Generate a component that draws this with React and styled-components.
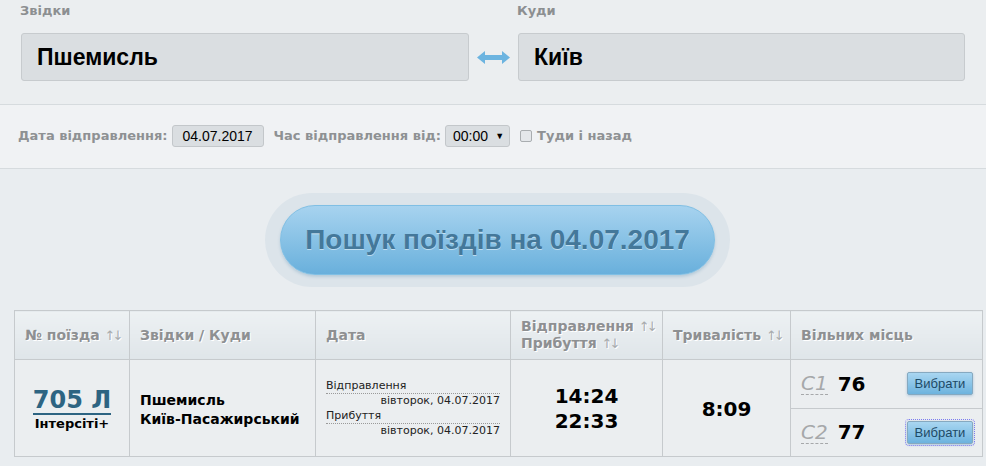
import styled, { createGlobalStyle } from 'styled-components';

const GlobalStyle = createGlobalStyle`
  html, body {
    margin: 0;
    padding: 0;
    background: #e9edf0;
  }
  * {
    box-sizing: border-box;
  }
`;

const Page = styled.div`
  width: 986px;
  height: 466px;
  overflow: hidden;
  background: #e9edf0;
  font-family: 'Liberation Sans', Arial, sans-serif;
`;

const StationsPanel = styled.div`
  display: flex;
  align-items: flex-end;
  height: 105px;
  padding: 0 21px 23px 21px;
  background: #ebeef0;
  border-bottom: 1px solid #d6dbde;
`;

const Field = styled.div`
  display: flex;
  flex-direction: column;
  width: ${({ $width }) => $width}px;
`;

const FieldLabel = styled.label`
  font-family: 'DejaVu Sans', Verdana, sans-serif;
  font-size: 13px;
  font-weight: 700;
  line-height: 16px;
  color: #8c8f91;
  margin: 0 0 14px -1px;
`;

const StationInput = styled.div`
  height: 48px;
  display: flex;
  align-items: center;
  padding: 0 15px;
  background: #dadee1;
  border: 1px solid #c7cbce;
  border-radius: 3px;
  font-size: 23px;
  font-weight: 700;
  color: #000;
`;

const Swap = styled.div`
  width: 49px;
  height: 48px;
  display: flex;
  align-items: center;
  justify-content: center;
`;

const FilterBar = styled.div`
  display: flex;
  align-items: center;
  height: 64px;
  padding: 0 18px 2px;
  background: #f0f2f4;
  border-bottom: 1px solid #d6dbde;
  font-family: 'DejaVu Sans', Verdana, sans-serif;
  font-size: 13px;
  font-weight: 700;
  color: #8e9193;
`;

const FilterLabel = styled.span`
  margin-right: 4px;
`;

const DateBox = styled.div`
  width: 92px;
  height: 22px;
  display: flex;
  align-items: center;
  justify-content: center;
  margin-right: 10px;
  background: #dadee1;
  border: 1px solid #c3c7ca;
  border-radius: 3px;
  font-family: 'Liberation Sans', Arial, sans-serif;
  font-size: 14px;
  font-weight: 400;
  color: #000;
`;

const TimeSelect = styled.div`
  width: 65px;
  height: 22px;
  display: flex;
  align-items: center;
  justify-content: space-between;
  padding: 0 5px 0 7px;
  margin-right: 10px;
  background: #dadee1;
  border: 1px solid #c3c7ca;
  border-radius: 3px;
  font-family: 'Liberation Sans', Arial, sans-serif;
  font-size: 14px;
  font-weight: 400;
  color: #000;

  span {
    font-size: 9px;
  }
`;

const Check = styled.span`
  width: 12px;
  height: 12px;
  margin-right: 5px;
  background: #e4e7ea;
  border: 1px solid #a9adb0;
  border-radius: 2px;
`;

const SearchArea = styled.div`
  display: flex;
  justify-content: center;
  padding: 24px 0 0 9px;
`;

const SearchRing = styled.div`
  width: 465px;
  height: 94px;
  padding: 12px 15px;
  background: #dce4ea;
  border-radius: 47px;
`;

const SearchButton = styled.button`
  width: 100%;
  height: 70px;
  display: flex;
  align-items: center;
  justify-content: center;
  padding: 0;
  background: linear-gradient(#a7d3ef, #69b0dc);
  border: 1px solid #80bfe4;
  border-radius: 35px;
  box-shadow: 0 2px 3px rgba(70, 130, 170, 0.25);
  font-family: 'Liberation Sans', Arial, sans-serif;
  font-size: 28px;
  font-weight: 700;
  color: #44789a;
  text-shadow: 0 1px 0 rgba(255, 255, 255, 0.5);
  cursor: pointer;
`;

const Table = styled.table`
  width: 968px;
  margin: 23px 0 0 14px;
  border-collapse: collapse;
  table-layout: fixed;
  font-family: 'DejaVu Sans', Verdana, sans-serif;
`;

const Th = styled.th`
  width: ${({ $width }) => $width}px;
  height: 49px;
  padding: 0 8px 0 10px;
  text-align: left;
  vertical-align: middle;
  white-space: nowrap;
  background: linear-gradient(#edf1f3, #dfe5e9);
  border: 1px solid #c6cacd;
  font-size: 14px;
  font-weight: 700;
  line-height: 17px;
  color: #8e9092;
  text-shadow: 1px 1px 0 #fff;
`;

const Sort = styled.span`
  font-size: 13px;
  font-weight: 400;
  letter-spacing: -3px;
  color: #a8abad;
`;

const Td = styled.td`
  height: 96px;
  padding: ${({ $flush }) => ($flush ? '0' : '0 10px')};
  text-align: ${({ $align }) => $align || 'left'};
  vertical-align: middle;
  background: #ebeef0;
  border: 1px solid #c6cacd;
  color: #000;
`;

const TrainNo = styled.a`
  display: inline-block;
  font-size: 24px;
  font-weight: 700;
  line-height: 26px;
  color: #2d6482;
  text-decoration: none;
  border-bottom: 2px solid #2d6482;
  padding-top: 3px;
`;

const TrainType = styled.div`
  font-size: 13px;
  font-weight: 700;
  line-height: 16px;
  margin-top: 1px;
`;

const Route = styled.div`
  font-size: 14px;
  font-weight: 700;
  line-height: 19px;
  padding-top: 4px;
`;

const DateCell = styled.div`
  font-size: 11px;
  line-height: 12px;
  color: #222;
  padding-top: 3px;
`;

const DateLabel = styled.div`
  border-bottom: 1px dotted #9a9a9a;
  padding-bottom: 1px;
`;

const DateValue = styled.div`
  text-align: right;
  font-size: 11px;
  line-height: 14px;
  margin-bottom: 2px;
`;

const BigTime = styled.div`
  font-size: 20px;
  font-weight: 700;
  line-height: 25px;
  padding-top: 2px;
`;

const Seats = styled.div`
  display: flex;
  flex-direction: column;
  height: 96px;
`;

const SeatRow = styled.div`
  flex: 1;
  display: flex;
  align-items: center;
  padding: 0 9px 0 10px;
  border-top: ${({ $first }) => ($first ? 'none' : '1px solid #c6cacd')};
`;

const Coach = styled.span`
  font-size: 20px;
  font-style: italic;
  color: #a6a8aa;
  border-bottom: 1px dashed #a6a8aa;
  line-height: 22px;
  margin-right: 10px;
`;

const Count = styled.span`
  flex: 1;
  font-size: 20px;
  font-weight: 700;
  line-height: 22px;
`;

const PickButton = styled.button`
  width: 66px;
  height: 23px;
  padding: 0;
  background: linear-gradient(#a9d6f1, #6db3de);
  border: 1px solid #86a9c0;
  border-radius: 2px;
  box-shadow: 0 1px 3px rgba(80, 140, 190, 0.4);
  font-family: 'Liberation Sans', Arial, sans-serif;
  font-size: 13px;
  color: #1d4a66;
  outline: ${({ $focused }) => ($focused ? '1px dotted #7c7cf0' : 'none')};
  outline-offset: 1px;
  cursor: pointer;
`;

const SwapIcon = () => (
  <svg width="33" height="13" viewBox="0 0 33 13">
    <polygon
      points="0,6.5 8,0 8,4 25,4 25,0 33,6.5 25,13 25,9 8,9 8,13"
      fill="#6cb4e0"
    />
  </svg>
);

const seats = [
  { coach: 'С1', count: 76 },
  { coach: 'С2', count: 77 }
];

const App = () => {
  return (
    <Page>
      <GlobalStyle />
      <StationsPanel>
        <Field $width={448}>
          <FieldLabel>Звідки</FieldLabel>
          <StationInput>Пшемисль</StationInput>
        </Field>
        <Swap>
          <SwapIcon />
        </Swap>
        <Field $width={447}>
          <FieldLabel>Куди</FieldLabel>
          <StationInput>Київ</StationInput>
        </Field>
      </StationsPanel>

      <FilterBar>
        <FilterLabel>Дата відправлення:</FilterLabel>
        <DateBox>04.07.2017</DateBox>
        <FilterLabel>Час відправлення від:</FilterLabel>
        <TimeSelect>
          00:00 <span>▼</span>
        </TimeSelect>
        <Check />
        Туди і назад
      </FilterBar>

      <SearchArea>
        <SearchRing>
          <SearchButton>Пошук поїздів на 04.07.2017</SearchButton>
        </SearchRing>
      </SearchArea>

      <Table>
        <thead>
          <tr>
            <Th $width={115}>
              № поїзда <Sort>↑↓</Sort>
            </Th>
            <Th $width={186}>Звідки / Куди</Th>
            <Th $width={195}>Дата</Th>
            <Th $width={152}>
              Відправлення <Sort>↑↓</Sort>
              <br />
              Прибуття <Sort>↑↓</Sort>
            </Th>
            <Th $width={128}>
              Тривалість <Sort>↑↓</Sort>
            </Th>
            <Th $width={192}>Вільних місць</Th>
          </tr>
        </thead>
        <tbody>
          <tr>
            <Td $align="center">
              <TrainNo>705 Л</TrainNo>
              <TrainType>Інтерсіті+</TrainType>
            </Td>
            <Td>
              <Route>
                Пшемисль
                <br />
                Київ-Пасажирський
              </Route>
            </Td>
            <Td>
              <DateCell>
                <DateLabel>Відправлення</DateLabel>
                <DateValue>вівторок, 04.07.2017</DateValue>
                <DateLabel>Прибуття</DateLabel>
                <DateValue>вівторок, 04.07.2017</DateValue>
              </DateCell>
            </Td>
            <Td $align="center">
              <BigTime>
                14:24
                <br />
                22:33
              </BigTime>
            </Td>
            <Td $align="center">
              <BigTime>8:09</BigTime>
            </Td>
            <Td $flush>
              <Seats>
                {seats.map((s, i) => (
                  <SeatRow key={s.coach} $first={i === 0}>
                    <Coach>{s.coach}</Coach>
                    <Count>{s.count}</Count>
                    <PickButton $focused={i === 1}>Вибрати</PickButton>
                  </SeatRow>
                ))}
              </Seats>
            </Td>
          </tr>
        </tbody>
      </Table>
    </Page>
  );
};

export default App;
